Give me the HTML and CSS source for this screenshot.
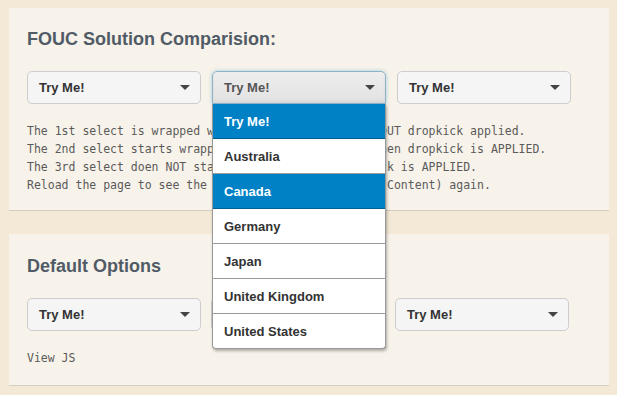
FILE: index.html
```html
<!DOCTYPE html>
<html lang="en">
<head>
    <meta charset="UTF-8">
    <title>Dropkick FOUC</title>
    <link rel="stylesheet" href="styles.css">
</head>
<body>
    <div class="page">
        <section class="panel">
            <h2 class="panel-title">FOUC Solution Comparision:</h2>
            <div class="select-row">
                <div class="dk-select">
                    <span class="dk-label">Try Me!</span>
                    <span class="dk-arrow"></span>
                </div>
                <div class="dk-wrap">
                    <div class="dk-select dk-open">
                        <span class="dk-label">Try Me!</span>
                        <span class="dk-arrow"></span>
                    </div>
                    <ul class="dk-options">
                        <li class="dk-option selected">Try Me!</li>
                        <li class="dk-option">Australia</li>
                        <li class="dk-option selected">Canada</li>
                        <li class="dk-option">Germany</li>
                        <li class="dk-option">Japan</li>
                        <li class="dk-option">United Kingdom</li>
                        <li class="dk-option">United States</li>
                    </ul>
                </div>
                <div class="dk-select">
                    <span class="dk-label">Try Me!</span>
                    <span class="dk-arrow"></span>
                </div>
            </div>
            <pre class="notes">The 1st select is wrapped with a dk_fouc class WITHOUT dropkick applied.
The 2nd select starts wrapped with dk_fouc class, then dropkick is APPLIED.
The 3rd select doen NOT start wrapped, while dropkick is APPLIED.
Reload the page to see the FOUC (Flash Of Un-styled Content) again.</pre>
        </section>

        <section class="panel">
            <h2 class="panel-title">Default Options</h2>
            <div class="select-row tight">
                <div class="dk-select">
                    <span class="dk-label">Try Me!</span>
                    <span class="dk-arrow"></span>
                </div>
                <div class="dk-select">
                    <span class="dk-label">Try Me!</span>
                    <span class="dk-arrow"></span>
                </div>
                <div class="dk-select">
                    <span class="dk-label">Try Me!</span>
                    <span class="dk-arrow"></span>
                </div>
            </div>
            <pre class="notes">View JS</pre>
        </section>
    </div>
</body>
</html>
```

FILE: styles.css
```css
:root {
    --bg-color: #f3e9d6;
    --panel-color: #f8f3ea;
    --title-color: #505b67;
    --blue: #0081c6;
    --blue-dark: #005f93;
}

body {
    margin: 0;
    background-color: var(--bg-color);
    font-family: 'Liberation Sans', Arial, sans-serif;
}

.page {
    width: 600px;
    padding: 8px 0 0 9px;
}

.panel {
    background-color: var(--panel-color);
    border-bottom: 1px solid #d3cec4;
    padding: 18px 18px 16px;
    margin-bottom: 23px;
}

.panel:last-child {
    padding-top: 19px;
    padding-bottom: 18px;
}

.panel-title {
    margin: 0;
    font-size: 18px;
    line-height: 26px;
    font-weight: bold;
    color: var(--title-color);
}

.select-row {
    display: flex;
    gap: 11px;
    margin-top: 19px;
}

.select-row.tight {
    gap: 10px;
}

.dk-wrap {
    position: relative;
}

.dk-select {
    box-sizing: border-box;
    width: 174px;
    height: 33px;
    display: flex;
    align-items: center;
    justify-content: space-between;
    padding: 0 10px 0 11px;
    background-color: #f5f5f5;
    border: 1px solid #cdcdcd;
    border-radius: 5px;
    font-size: 13px;
    font-weight: bold;
    color: #333;
}

.dk-arrow {
    width: 0;
    height: 0;
    border-left: 5px solid transparent;
    border-right: 5px solid transparent;
    border-top: 5px solid #444;
}

.dk-open {
    border-color: #8db3c9;
    border-radius: 5px 5px 0 0;
    background: linear-gradient(#eeeeee, #e2e2e2);
    box-shadow: 0 0 4px rgba(0, 129, 198, 0.35), inset 0 -2px 3px rgba(0, 0, 0, 0.06);
    color: #555;
}

.dk-options {
    position: absolute;
    top: 33px;
    left: 0;
    width: 174px;
    margin: 0;
    padding: 0;
    list-style: none;
    background-color: #fff;
    border: 1px solid #999;
    border-top: none;
    border-radius: 0 0 4px 4px;
    box-shadow: 1px 2px 3px rgba(0, 0, 0, 0.3);
    box-sizing: border-box;
    overflow: hidden;
    z-index: 2;
}

.dk-option {
    height: 35px;
    box-sizing: border-box;
    display: flex;
    align-items: center;
    padding-left: 11px;
    border-bottom: 1px solid #9a9a9a;
    font-size: 13px;
    font-weight: bold;
    color: #333;
}

.dk-option:last-child {
    border-bottom: none;
    height: 34px;
}

.dk-option.selected {
    background-color: var(--blue);
    border-bottom-color: var(--blue-dark);
    color: #fff;
}

.notes {
    margin: 18px 0 0;
    font-family: 'DejaVu Sans Mono', 'Liberation Mono', monospace;
    font-size: 11.5px;
    line-height: 18px;
    color: #5a5a5a;
}
```
